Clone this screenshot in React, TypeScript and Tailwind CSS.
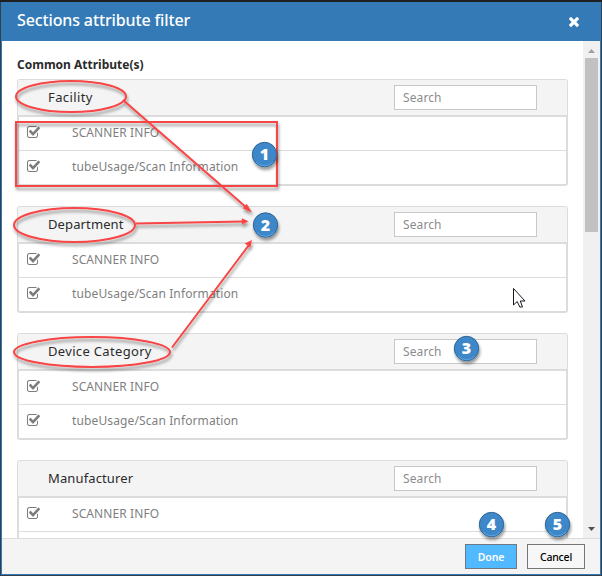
import React from "react";

function CheckIcon() {
  return (
    <svg viewBox="0 128 1664 1408" preserveAspectRatio="none" className="-mt-[3px] block h-[12px] w-[13px] shrink-0 fill-[#7c7c7c]">
      <path d="M1408 930v318q0 119-84.5 203.5t-203.5 84.5h-832q-119 0-203.5-84.5t-84.5-203.5v-832q0-119 84.5-203.5t203.5-84.5h832q63 0 117 25 15 7 18 23 3 17-9 29l-49 49q-10 10-23 10-3 0-9-2-23-6-45-6h-832q-66 0-113 47t-47 113v832q0 66 47 113t113 47h832q66 0 113-47t47-113v-254q0-13 9-22l64-64q10-10 23-10 6 0 12 3 20 8 20 29zm231-489l-814 814q-24 24-57 24t-57-24l-430-430q-24-24-24-57t24-57l110-110q24-24 57-24t57 24l263 263 647-647q24-24 57-24t57 24l110 110q24 24 24 57t-24 57z" />
    </svg>
  );
}

function CloseIcon() {
  return (
    <svg viewBox="110 366 1188 1188" className="block size-[10px] fill-white">
      <path d="M1298 1322q0 40-28 68l-136 136q-28 28-68 28t-68-28l-294-294-294 294q-28 28-68 28t-68-28l-136-136q-28-28-28-68t28-68l294-294-294-294q-28-28-28-68t28-68l136-136q28-28 68-28t68 28l294 294 294-294q28-28 68-28t68 28l136 136q28 28 28 68t-28 68l-294 294 294 294q28 28 28 68z" />
    </svg>
  );
}

const groups = [
  { name: "Facility", spacing: "tracking-[0.4px]", rows: 2 },
  { name: "Department", spacing: "tracking-[0.12px]", rows: 2 },
  { name: "Device Category", spacing: "tracking-[0.33px]", rows: 2 },
  { name: "Manufacturer", spacing: "tracking-[0.12px]", rows: 1 },
];

function Group({ name, spacing, rows }: { name: string; spacing: string; rows: number }) {
  return (
    <section className="mb-5 h-[107px] shrink-0 rounded-[3px] border-t border-b-2 border-[#dcdcdc]">
      <div className="flex h-[37px] items-center justify-between rounded-t-[2px] border-x border-b-2 border-[#dcdcdc] bg-[#f4f4f4] pr-[30px] pl-[30px]">
        <span className={`-mt-[2px] text-[13px] leading-4 text-[#2b2b2b] ${spacing}`}>{name}</span>
        <input
          placeholder="Search"
          className="block h-[25px] w-[143px] border border-[#c8c8c8] bg-white px-2 text-[12px] tracking-[0.1px] outline-none placeholder:text-[#8c8c8c]"
        />
      </div>
      <div className="flex h-[34px] items-center border-x-2 border-b border-[#dcdcdc] pb-px pl-2">
        <CheckIcon />
        <span className="ml-[32px] text-[12px] leading-4 tracking-[0.09px] text-[#7f7f7f]">SCANNER INFO</span>
      </div>
      <div className="flex h-[33px] items-center border-x-2 border-[#dcdcdc] pb-px pl-2">
        {rows > 1 && (
          <>
            <CheckIcon />
            <span className="ml-[32px] text-[12px] leading-4 tracking-[0.12px] text-[#7f7f7f]">tubeUsage/Scan Information</span>
          </>
        )}
      </div>
    </section>
  );
}

const badges = [
  { n: 1, x: 264.5, y: 154.5 },
  { n: 2, x: 265.5, y: 225 },
  { n: 3, x: 466.5, y: 348.5 },
  { n: 4, x: 491.5, y: 524.5 },
  { n: 5, x: 557.5, y: 524.5 },
];

function Annotations() {
  return (
    <svg width="602" height="576" className="pointer-events-none absolute top-0 left-0">
      <defs>
        <filter id="shade" x="-20%" y="-20%" width="150%" height="150%">
          <feDropShadow dx="1" dy="3" stdDeviation="1.8" floodColor="#000" floodOpacity="0.4" />
        </filter>
        <linearGradient id="disc" x1="0" y1="0" x2="0" y2="1">
          <stop offset="0" stopColor="#3f88c8" />
          <stop offset="1" stopColor="#3d87c9" />
        </linearGradient>
      </defs>
      <g filter="url(#shade)" fill="none" stroke="#f84444" strokeWidth="2">
        <ellipse cx="71" cy="96.5" rx="55" ry="15.5" />
        <ellipse cx="74.5" cy="225" rx="60.5" ry="17" />
        <ellipse cx="92" cy="352" rx="78" ry="15" />
        <rect x="16" y="122" width="261" height="64" />
        <path d="M123 100L247 208M136 223.5L243 221.5M172 347.500L249 245" />
        <g fill="#f84444" stroke="none">
          <path d="M252 212.500L242.700 208.300L246.700 203.700Z" />
          <path d="M248.500 221.200L242 224.500L241.800 218.200Z" />
          <path d="M252 240L250.300 247.500L244.800 243.500Z" />
        </g>
      </g>
      {badges.map((b) => (
        <g key={b.n}>
          <circle cx={b.x} cy={b.y} r="12.2" fill="url(#disc)" stroke="#2d6595" filter="url(#shade)" />
          <path d={`M${b.x - 8.5} ${b.y + 7.5}A11.300 11.300 0 0 0 ${b.x + 8.5} ${b.y + 7.5}`} fill="none" stroke="#68b2f0" strokeOpacity=".75" />
          <text x={b.x} y={b.y + 5.5} textAnchor="middle" fill="#fff" className="font-['Noto_Sans','Open_Sans',sans-serif] text-[16px] font-black">
            {b.n}
          </text>
        </g>
      ))}
      <path d="M513.500 288.500V305L517.200 301.500L519.800 307H522.500L520.300 301H525Z" fill="#fff" stroke="#17171f" strokeWidth="1" />
    </svg>
  );
}

export default function App() {
  return (
    <div className="relative h-[576px] w-[602px] overflow-hidden bg-[#33404c] font-['Noto_Sans','Open_Sans',sans-serif]">
      <div className="h-[2px] bg-[#1d1f20]" />
      <main className="ml-px flex h-[573px] w-[600px] flex-col border-x border-b border-[#337ab7] bg-white">
        <header className="flex h-[39px] shrink-0 items-center justify-between bg-[#337ab7] pr-[21px] pl-[15px]">
          <h1 className="-mt-[3px] text-[16px] leading-5 font-medium tracking-[-0.13px] text-white">Sections attribute filter</h1>
          <CloseIcon />
        </header>
        <div className="flex h-[497px] shrink-0">
          <div className="flex min-w-0 flex-1 flex-col overflow-hidden pr-[15px] pl-[15px]">
            <h2 className="mt-[16px] mb-[6px] shrink-0 text-[12px] leading-4 font-bold tracking-[0px] text-[#2b2b2b]">Common Attribute(s)</h2>
            {groups.map((g) => (
              <Group key={g.name} {...g} />
            ))}
          </div>
          <div className="flex w-[17px] flex-col items-center bg-[#f0f0f0]">
            <div className="flex h-[17px] shrink-0 items-center">
              <svg width="7" height="4" className="mt-[2px]"><path d="M3.500 0L7 4H0Z" fill="#a0a0a0" /></svg>
            </div>
            <div className="h-[174px] w-[13px] bg-[#c1c1c1]" />
            <div className="mt-auto flex h-[17px] items-center">
              <svg width="7" height="4" className="-mt-[2px]"><path d="M3.500 4L7 0H0Z" fill="#505050" /></svg>
            </div>
          </div>
        </div>
        <footer className="flex h-[36px] shrink-0 items-start justify-end gap-[10px] border-t border-[#dcdcdc] bg-[#f4f4f4] pt-[5px] pr-[15px]">
          <button className="h-[25px] w-[52px] border border-[#6f7880] bg-[#50b9ff] pt-[2px] text-[10.5px] leading-none font-semibold tracking-[-0.1px] text-white">Done</button>
          <button className="h-[25px] w-[58px] border border-[#757575] bg-[#f7f7f7] pt-[2px] text-[10.5px] leading-none font-medium tracking-[-0.2px] text-black">Cancel</button>
        </footer>
      </main>
      <Annotations />
    </div>
  );
}
